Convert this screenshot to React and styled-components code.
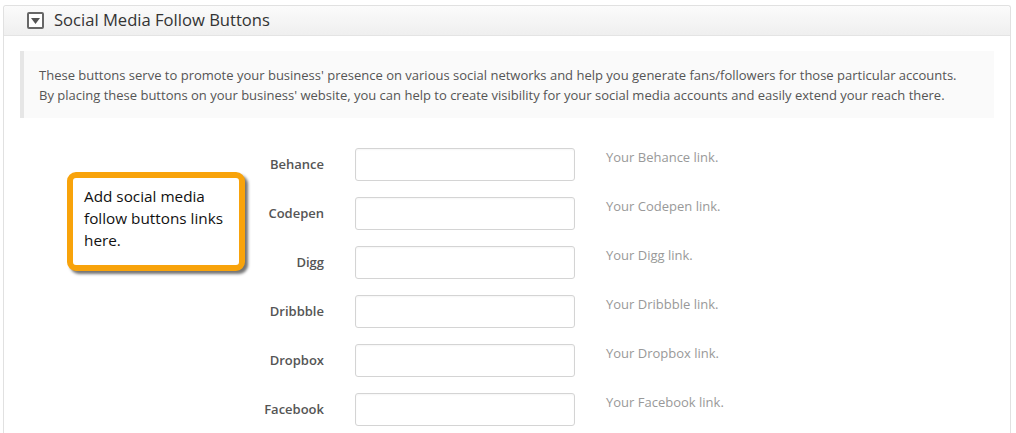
import React from "react";
import styled, { createGlobalStyle } from "styled-components";

const GlobalStyle = createGlobalStyle`
  body {
    margin: 0;
    background: #fff;
    font-family: "Open Sans", "Liberation Sans", sans-serif;
  }
`;

const Page = styled.div`
  position: relative;
  padding: 5px 5px 0 3px;
  height: 433px;
  box-sizing: border-box;
  overflow: hidden;
`;

const Panel = styled.div`
  border: 1px solid #e1e1e1;
  border-bottom: none;
  border-radius: 3px 3px 0 0;
  height: 100%;
`;

const Header = styled.div`
  display: flex;
  align-items: center;
  height: 29px;
  padding-left: 23px;
  background: linear-gradient(#fbfbfb, #efefef);
  border-bottom: 1px solid #e4e4e4;
  border-radius: 3px 3px 0 0;
`;

const Toggle = styled.span`
  display: flex;
  align-items: center;
  justify-content: center;
  width: 13px;
  height: 13px;
  border: 2px solid #676767;
  border-radius: 2px;
  margin-right: 10px;
  background: #fff;
`;

const Title = styled.h3`
  margin: 0;
  font-size: 16.6px;
  font-weight: 400;
  color: #333;
  line-height: 1;
`;

const Body = styled.div`
  padding: 15px 16px 0 16px;
`;

const Description = styled.div`
  border-left: 4px solid #e6e6e6;
  background: #fafafa;
  padding: 14px 15px 13px 15px;
  font-size: 13px;
  line-height: 20px;
  color: #555;
  p {
    margin: 0;
    white-space: nowrap;
  }
`;

const Form = styled.div`
  display: flex;
  flex-direction: column;
  gap: 16px;
  padding-top: 30px;
`;

const Row = styled.div`
  display: grid;
  grid-template-columns: 304px 220px auto;
  column-gap: 31px;
  align-items: start;
`;

const Label = styled.label`
  text-align: right;
  font-size: 13px;
  font-weight: 600;
  color: #555;
  line-height: 33px;
`;

const Input = styled.input`
  box-sizing: border-box;
  width: 220px;
  height: 33px;
  border: 1px solid #d4d4d4;
  border-radius: 3px;
  background: #fff;
  box-shadow: inset 0 1px 2px rgba(0, 0, 0, 0.04);
  outline: none;
`;

const Help = styled.span`
  font-size: 13px;
  color: #999;
  line-height: 16px;
  padding-top: 1px;
`;

const Callout = styled.div`
  position: absolute;
  left: 67px;
  top: 172px;
  width: 178px;
  height: 99px;
  box-sizing: border-box;
  border: 6px solid #f8a30b;
  border-radius: 9px;
  background: #fff;
  box-shadow: 3px 3px 3px rgba(0, 0, 0, 0.55);
  padding: 7px 11px;
  font-family: "Open Sans", "Liberation Sans", sans-serif;
  font-size: 15.3px;
  line-height: 22px;
  color: #111;
`;

const fields = ["Behance", "Codepen", "Digg", "Dribbble", "Dropbox", "Facebook"];

export default function App() {
  return (
    <>
      <GlobalStyle />
      <Page>
        <Panel>
          <Header>
            <Toggle>
              <svg width="9" height="6" viewBox="0 0 9 6">
                <path d="M0 0 H9 L4.5 6 Z" fill="#555" />
              </svg>
            </Toggle>
            <Title>Social Media Follow Buttons</Title>
          </Header>
          <Body>
            <Description>
              <p>
                These buttons serve to promote your business' presence on various social networks and help you generate fans/followers for those particular accounts.
              </p>
              <p>
                By placing these buttons on your business' website, you can help to create visibility for your social media accounts and easily extend your reach there.
              </p>
            </Description>
            <Form>
              {fields.map((name) => (
                <Row key={name}>
                  <Label>{name}</Label>
                  <Input type="text" />
                  <Help>Your {name} link.</Help>
                </Row>
              ))}
            </Form>
          </Body>
        </Panel>
        <Callout>Add social media follow buttons links here.</Callout>
      </Page>
    </>
  );
}
